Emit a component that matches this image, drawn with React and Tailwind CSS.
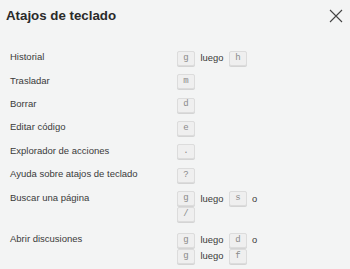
import React from 'react';

const shortcuts = [
  { label: 'Historial', lines: [['g', 'luego', 'h']] },
  { label: 'Trasladar', lines: [['m']] },
  { label: 'Borrar', lines: [['d']] },
  { label: 'Editar código', lines: [['e']] },
  { label: 'Explorador de acciones', lines: [['.']] },
  { label: 'Ayuda sobre atajos de teclado', lines: [['?']] },
  { label: 'Buscar una página', lines: [['g', 'luego', 's', 'o'], ['/']] },
  { label: 'Abrir discusiones', lines: [['g', 'luego', 'd', 'o'], ['g', 'luego', 'f']] },
];

const Key = ({ children }) => (
  <kbd className="inline-flex items-center justify-center w-[18px] h-[15px] rounded-[2px] border border-[#dcdcdc] bg-[#efefef] shadow-[0_1px_0_#d4d4d4] text-[9px] text-[#8a8a8a] font-['Liberation_Mono',monospace]">
    {children}
  </kbd>
);

const Line = ({ items }) => (
  <div className="flex items-center h-[15px]">
    {items.map((item, i) => {
      if (item === 'luego') {
        return <span key={i} className="mx-[5.5px] text-[9.4px] text-[#3a3a3a]">luego</span>;
      }
      if (item === 'o') {
        return <span key={i} className="ml-[5px] text-[9.4px] text-[#3a3a3a]">o</span>;
      }
      return <Key key={i}>{item}</Key>;
    })}
  </div>
);

export default function App() {
  return (
    <div className="w-[350px] h-[269px] overflow-hidden bg-[#f3f4f4] font-['Liberation_Sans',Arial,sans-serif]">
      {/* Header */}
      <div className="flex items-center justify-between h-[32px] pl-[6px] pr-[6px]">
        <h1 className="text-[13.3px] font-bold text-[#2a2a2a] leading-none">Atajos de teclado</h1>
        <svg className="w-[16px] h-[16px]" viewBox="0 0 16 16" fill="none" stroke="#444" strokeWidth="1.1">
          <path d="M2 2l12 12M14 2L2 14" />
        </svg>
      </div>

      {/* Shortcut list */}
      <div className="pt-[14.8px]">
        {shortcuts.map((s, i) => (
          <div key={i} className={`flex py-[4.2px] ${i === 7 ? 'pt-[6.5px]' : ''}`}>
            <div className="w-[177px] pl-[10px] h-[15px] flex items-center text-[9.5px] text-[#3a3a3a] -translate-y-[1px]">
              {s.label}
            </div>
            <div className="flex flex-col gap-y-[1px]">
              {s.lines.map((line, j) => (
                <Line key={j} items={line} />
              ))}
            </div>
          </div>
        ))}
      </div>
    </div>
  );
}
